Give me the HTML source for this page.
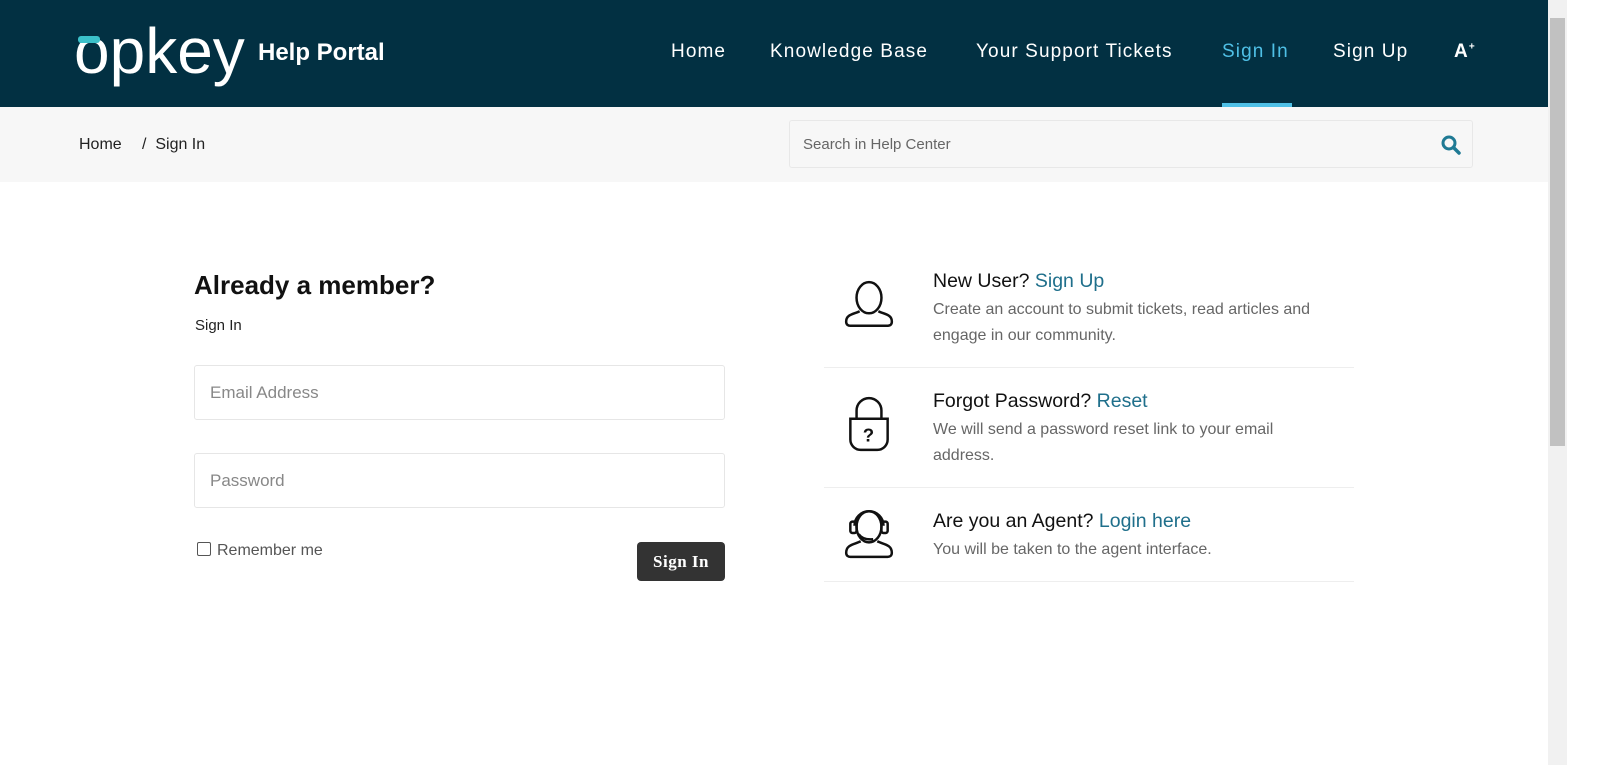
<!DOCTYPE html>
<html><head><meta charset="utf-8"><style>
*{margin:0;padding:0;box-sizing:border-box}
body{width:1600px;height:765px;overflow:hidden;font-family:"Liberation Sans",sans-serif;background:#fff;position:relative}
.hdr{position:absolute;left:0;top:0;width:1548px;height:107px;background:#023042}
.logo{position:absolute;left:74px;top:18px;color:#fff;font-size:64px;letter-spacing:0px;line-height:66px;font-weight:400}
.hp{position:absolute;left:258px;top:39px;color:#fff;font-size:24px;font-weight:bold}
.nav a{position:absolute;top:41px;color:#fff;font-size:19px;letter-spacing:1.1px;text-decoration:none}
.bar{position:absolute;left:0;top:107px;width:1548px;height:75px;background:#f7f7f7}
.crumb{position:absolute;top:136px;font-size:16px;color:#222}
.search{position:absolute;left:789px;top:120px;width:684px;height:48px;border:1px solid #e8e8e8;border-radius:3px;background:#f7f7f7;font-size:15px;color:#666;padding:15px 13px}
.sb{position:absolute;left:1548px;top:0;width:19px;height:765px;background:#f1f1f1}
.sb div{position:absolute;left:2px;top:18px;width:15px;height:428px;background:#c1c1c1}
h1{position:absolute;left:194px;top:270px;font-size:26px;color:#111}
.inp{position:absolute;left:194px;width:531px;height:55px;border:1px solid #e6e6e6;border-radius:3px;font-size:17px;color:#888;padding:17px 15px}
.btn{position:absolute;left:637px;top:542px;width:88px;height:39px;background:#333;border-radius:4px;color:#fff;font-family:"Liberation Serif",serif;font-weight:bold;font-size:17px;text-align:center;line-height:39px;letter-spacing:.5px}
.it{position:absolute;left:824px;width:530px;border-bottom:1px solid #eee}
.t{position:absolute;left:109px;font-size:19.5px;color:#111}
.t span{color:#1f6f8b}
.d{position:absolute;left:109px;font-size:16px;color:#666;line-height:26px;width:400px}
svg.ic{position:absolute;left:18px}
</style></head><body>
<div class="hdr">
<div class="logo">opkey</div>
<div style="position:absolute;left:78px;top:36px;width:22px;height:7px;background:#3bc0c9;border-radius:3px"></div>
<div class="hp">Help Portal</div>
<div class="nav">
<a style="left:671px">Home</a>
<a style="left:770px">Knowledge Base</a>
<a style="left:976px">Your Support Tickets</a>
<a style="left:1222px;color:#4fc0e6">Sign In</a>
<a style="left:1333px">Sign Up</a>
<a style="left:1454px;font-weight:bold">A<sup style="font-size:10px">+</sup></a>
</div>
<div style="position:absolute;left:1222px;top:103px;width:70px;height:4px;background:#4fc0e6"></div>
</div>
<div class="bar"></div>
<div class="crumb" style="left:79px">Home</div>
<div class="crumb" style="left:142px">/&nbsp; Sign In</div>
<div class="search">Search in Help Center</div>
<svg style="position:absolute;left:1440px;top:134px" width="22" height="22" viewBox="0 0 22 22"><circle cx="9" cy="9" r="6" fill="none" stroke="#1f7a94" stroke-width="3"/><path d="M13.5 13.5L19 19" stroke="#1f7a94" stroke-width="3.5" stroke-linecap="round"/></svg>
<div class="sb"><div></div></div>

<h1>Already a member?</h1>
<div style="position:absolute;left:195px;top:317px;font-size:15px;color:#222">Sign In</div>
<div class="inp" style="top:365px">Email Address</div>
<div class="inp" style="top:453px">Password</div>
<div style="position:absolute;left:197px;top:542px;width:14px;height:14px;border:1px solid #555;border-radius:2px"></div>
<div style="position:absolute;left:217px;top:542px;font-size:16px;color:#555">Remember me</div>
<div class="btn">Sign In</div>

<div class="it" style="top:262px;height:106px">
<svg class="ic" style="top:16px" width="54" height="54" viewBox="0 0 52 52" fill="none" stroke="#111" stroke-width="2.4"><ellipse cx="26" cy="19" rx="12" ry="15"/><path d="M17 32c-6 3-13 3-13 10 0 3 2 4 4 4h36c2 0 4-1 4-4 0-7-7-7-13-10"/></svg>
<div class="t" style="top:8px">New User? <span>Sign Up</span></div>
<div class="d" style="top:35px">Create an account to submit tickets, read articles and engage in our community.</div>
</div>
<div class="it" style="top:368px;height:120px">
<svg class="ic" style="top:28px" width="54" height="58" viewBox="0 0 52 56" fill="none" stroke="#111" stroke-width="2.4"><path d="M14 22v-8a12 12 0 0 1 24 0v8"/><path d="M8 22h36v20a10 10 0 0 1-10 10H18A10 10 0 0 1 8 42z"/><text x="20" y="44" font-size="18" font-weight="bold" fill="#111" stroke="none" font-family="Liberation Sans">?</text></svg>
<div class="t" style="top:22px">Forgot Password? <span>Reset</span></div>
<div class="d" style="top:49px;width:385px">We will send a password reset link to your email address.</div>
</div>
<div class="it" style="top:488px;height:94px">
<svg class="ic" style="top:17px" width="54" height="56" viewBox="0 0 52 54" fill="none" stroke="#111" stroke-width="2.4"><ellipse cx="26" cy="21" rx="12" ry="15"/><path d="M12 20a14 14 0 0 1 28 0"/><rect x="8" y="16" width="6" height="11" rx="2"/><rect x="38" y="16" width="6" height="11" rx="2"/><path d="M16 28q4 6 14 5"/><path d="M18 35c-6 3-14 3-14 11 0 3 2 4 4 4h36c2 0 4-1 4-4 0-8-8-8-14-11"/></svg>
<div class="t" style="top:22px">Are you an Agent? <span>Login here</span></div>
<div class="d" style="top:49px">You will be taken to the agent interface.</div>
</div>
</body></html>
